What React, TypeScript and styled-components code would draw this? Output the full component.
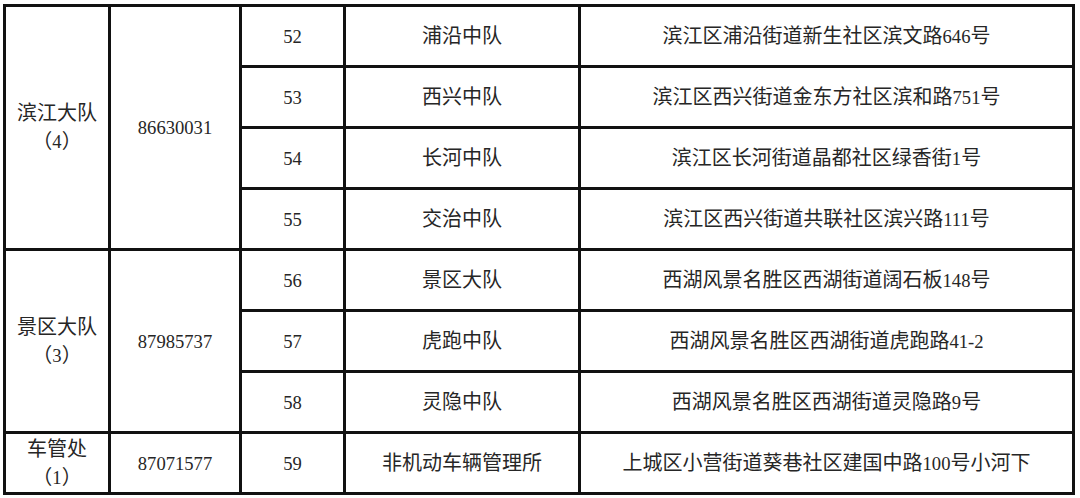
import styled, { createGlobalStyle } from "styled-components";

const GlobalStyle = createGlobalStyle`
  html, body {
    margin: 0;
    padding: 0;
    background: #ffffff;
  }
  body {
    font-family: "Liberation Serif", "Noto Sans CJK SC", serif;
  }
`;

const Page = styled.div`
  width: 1080px;
  height: 498px;
  overflow: hidden;
  padding: 4px 0 0 3px;
  box-sizing: border-box;
`;

const Table = styled.table`
  border-collapse: collapse;
  table-layout: fixed;
  width: 1069px;
  color: #262626;
  font-size: 20px;
`;

const Col = styled.col<{ $w: number }>`
  width: ${(p) => p.$w}px;
`;

const Cell = styled.td<{ $tall?: boolean }>`
  border: 3px solid #111111;
  height: 58px;
  padding: 0;
  text-align: center;
  vertical-align: middle;
  line-height: ${(p) => (p.$tall ? "28px" : "24px")};
  white-space: nowrap;
`;

// the numerals sit a touch smaller than the Chinese in the original
const Num = styled.span`
  font-size: 18.6px;
`;

type Station = { no: number; name: string; address: string };
type Group = { title: string; count: string; phone: string; stations: Station[] };

const groups: Group[] = [
  {
    title: "滨江大队",
    count: "（4）",
    phone: "86630031",
    stations: [
      { no: 52, name: "浦沿中队", address: "滨江区浦沿街道新生社区滨文路646号" },
      { no: 53, name: "西兴中队", address: "滨江区西兴街道金东方社区滨和路751号" },
      { no: 54, name: "长河中队", address: "滨江区长河街道晶都社区绿香街1号" },
      { no: 55, name: "交治中队", address: "滨江区西兴街道共联社区滨兴路111号" },
    ],
  },
  {
    title: "景区大队",
    count: "（3）",
    phone: "87985737",
    stations: [
      { no: 56, name: "景区大队", address: "西湖风景名胜区西湖街道阔石板148号" },
      { no: 57, name: "虎跑中队", address: "西湖风景名胜区西湖街道虎跑路41-2" },
      { no: 58, name: "灵隐中队", address: "西湖风景名胜区西湖街道灵隐路9号" },
    ],
  },
  {
    title: "车管处",
    count: "（1）",
    phone: "87071577",
    stations: [
      { no: 59, name: "非机动车辆管理所", address: "上城区小营街道葵巷社区建国中路100号小河下" },
    ],
  },
];

const widths = [105, 131, 104, 235, 494];

const Mixed = ({ text }: { text: string }) => (
  <>
    {text.split(/([\d-]+)/).map((part, i) =>
      /\d/.test(part) ? <Num key={i}>{part}</Num> : part
    )}
  </>
);

export default function App() {
  return (
    <Page>
      <GlobalStyle />
      <Table>
        <colgroup>
          {widths.map((w, i) => (
            <Col key={i} $w={w} />
          ))}
        </colgroup>
        <tbody>
          {groups.map((g) =>
            g.stations.map((s, i) => (
              <tr key={s.no}>
                {i === 0 && (
                  <>
                    <Cell rowSpan={g.stations.length} $tall>
                      {g.title}
                      <br />
                      <Mixed text={g.count} />
                    </Cell>
                    <Cell rowSpan={g.stations.length}>
                      <Num>{g.phone}</Num>
                    </Cell>
                  </>
                )}
                <Cell>
                  <Num>{s.no}</Num>
                </Cell>
                <Cell>{s.name}</Cell>
                <Cell>
                  <Mixed text={s.address} />
                </Cell>
              </tr>
            ))
          )}
        </tbody>
      </Table>
    </Page>
  );
}
